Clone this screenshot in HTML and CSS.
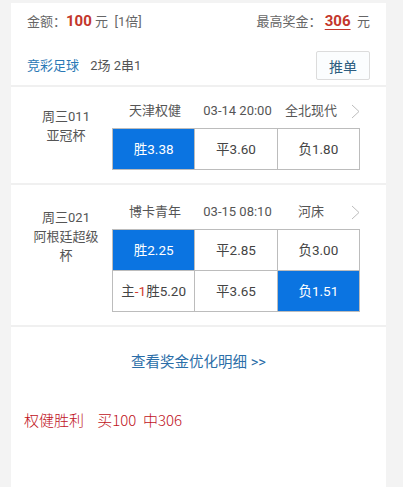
FILE: index.html
```html
<!DOCTYPE html>
<html lang="zh">
<head>
    <meta charset="UTF-8">
    <meta name="viewport" content="width=device-width, initial-scale=1.0">
    <title>投注详情</title>
    <link rel="stylesheet" href="styles.css">
</head>
<body>
    <div class="panel">
        <div class="summary">
            <div class="summary-row">
                <div class="amount">
                    金额：<span class="money">100</span> 元&nbsp; [1倍]
                </div>
                <div class="amount">
                    最高奖金：&nbsp;<span class="money prize">306</span>&nbsp; 元
                </div>
            </div>
            <div class="summary-row play-row">
                <div>
                    <span class="play-type">竞彩足球</span>
                    <span class="play-info">2场 2串1</span>
                </div>
                <button class="push-button">推单</button>
            </div>
        </div>

        <div class="match">
            <div class="match-label">周三011<br>亚冠杯</div>
            <div class="match-body">
                <div class="match-head">
                    <span>天津权健</span>
                    <span>03-14 20:00</span>
                    <span>全北现代</span>
                    <svg class="chevron" width="9" height="15" viewBox="0 0 9 15"><path d="M1 1 L8 7.5 L1 14" fill="none" stroke="#bdbdbd" stroke-width="1"/></svg>
                </div>
                <div class="odds">
                    <div class="odd selected">胜3.38</div>
                    <div class="odd">平3.60</div>
                    <div class="odd">负1.80</div>
                </div>
            </div>
        </div>

        <div class="match">
            <div class="match-label">周三021<br>阿根廷超级杯</div>
            <div class="match-body">
                <div class="match-head">
                    <span>博卡青年</span>
                    <span>03-15 08:10</span>
                    <span>河床</span>
                    <svg class="chevron" width="9" height="15" viewBox="0 0 9 15"><path d="M1 1 L8 7.5 L1 14" fill="none" stroke="#bdbdbd" stroke-width="1"/></svg>
                </div>
                <div class="odds">
                    <div class="odd selected">胜2.25</div>
                    <div class="odd">平2.85</div>
                    <div class="odd">负3.00</div>
                    <div class="odd">主<span class="handicap">-1</span>胜5.20</div>
                    <div class="odd">平3.65</div>
                    <div class="odd selected">负1.51</div>
                </div>
            </div>
        </div>

        <div class="footer">
            <a class="detail-link" href="#">查看奖金优化明细 &gt;&gt;</a>
            <p class="note">权健胜利&nbsp;&nbsp;&nbsp; 买100&nbsp; 中306</p>
        </div>
    </div>
</body>
</html>
```

FILE: styles.css
```css
body {
    margin: 0;
    padding: 3px 17px 0 11px;
    background: #f3f3f3;
    font-family: 'Roboto', 'Noto Sans CJK SC', sans-serif;
    font-size: 13px;
    color: #555;
    height: 484px;
    overflow: hidden;
}

.panel {
    background: #fff;
    min-height: 484px;
}

.summary {
    padding: 8px 16px 5px 16px;
}

.summary-row {
    display: flex;
    justify-content: space-between;
    align-items: center;
    line-height: 20px;
}

.amount {
    color: #666;
}

.money {
    color: #c3362b;
    font-weight: bold;
    font-size: 15px;
}

.prize {
    text-decoration: underline;
    text-underline-offset: 3px;
}

.play-row {
    margin-top: 19px;
}

.play-type {
    color: #2a78b5;
    margin-right: 8px;
}

.play-info {
    color: #555;
}

.push-button {
    width: 54px;
    height: 29px;
    background: #fbfdfe;
    border: 1px solid #dcdcdc;
    border-radius: 2px;
    color: #2d5d80;
    font-family: 'Roboto', 'Noto Sans CJK SC', sans-serif;
    font-size: 14px;
    padding: 0;
}

.match {
    display: flex;
    border-top: 2px solid #f0f0f0;
    padding: 14px 26px 13px 20px;
}

.match + .match {
    padding-top: 17px;
}

.match-label {
    width: 70px;
    margin-right: 11px;
    padding-top: 6px;
    text-align: center;
    line-height: 19px;
    color: #555;
}

.match-body {
    width: 248px;
}

.match-head {
    display: grid;
    grid-template-columns: 86px 79px 68px 15px;
    align-items: center;
    text-align: center;
    line-height: 20px;
    color: #555;
}

.chevron {
    justify-self: end;
}

.odds {
    display: grid;
    grid-template-columns: repeat(3, 1fr);
    margin-top: 7px;
    border-top: 1px solid #bcbcbc;
    border-left: 1px solid #bcbcbc;
}

.odd {
    height: 40px;
    line-height: 40px;
    text-align: center;
    border-right: 1px solid #bcbcbc;
    border-bottom: 1px solid #bcbcbc;
    color: #444;
    font-size: 13.5px;
}

.odd.selected {
    background: #0b74e1;
    color: #fff;
}

.handicap {
    color: #d23a2e;
}

.footer {
    border-top: 2px solid #f0f0f0;
    padding: 26px 13px 40px 13px;
}

.detail-link {
    display: block;
    text-align: center;
    line-height: 20px;
    font-size: 14.5px;
    color: #2b6ea8;
    text-decoration: none;
}

.note {
    margin: 37px 0 0 0;
    line-height: 20px;
    font-size: 15px;
    font-weight: 300;
    color: #c0121b;
    font-family: 'Noto Sans CJK SC', sans-serif;
}
```
